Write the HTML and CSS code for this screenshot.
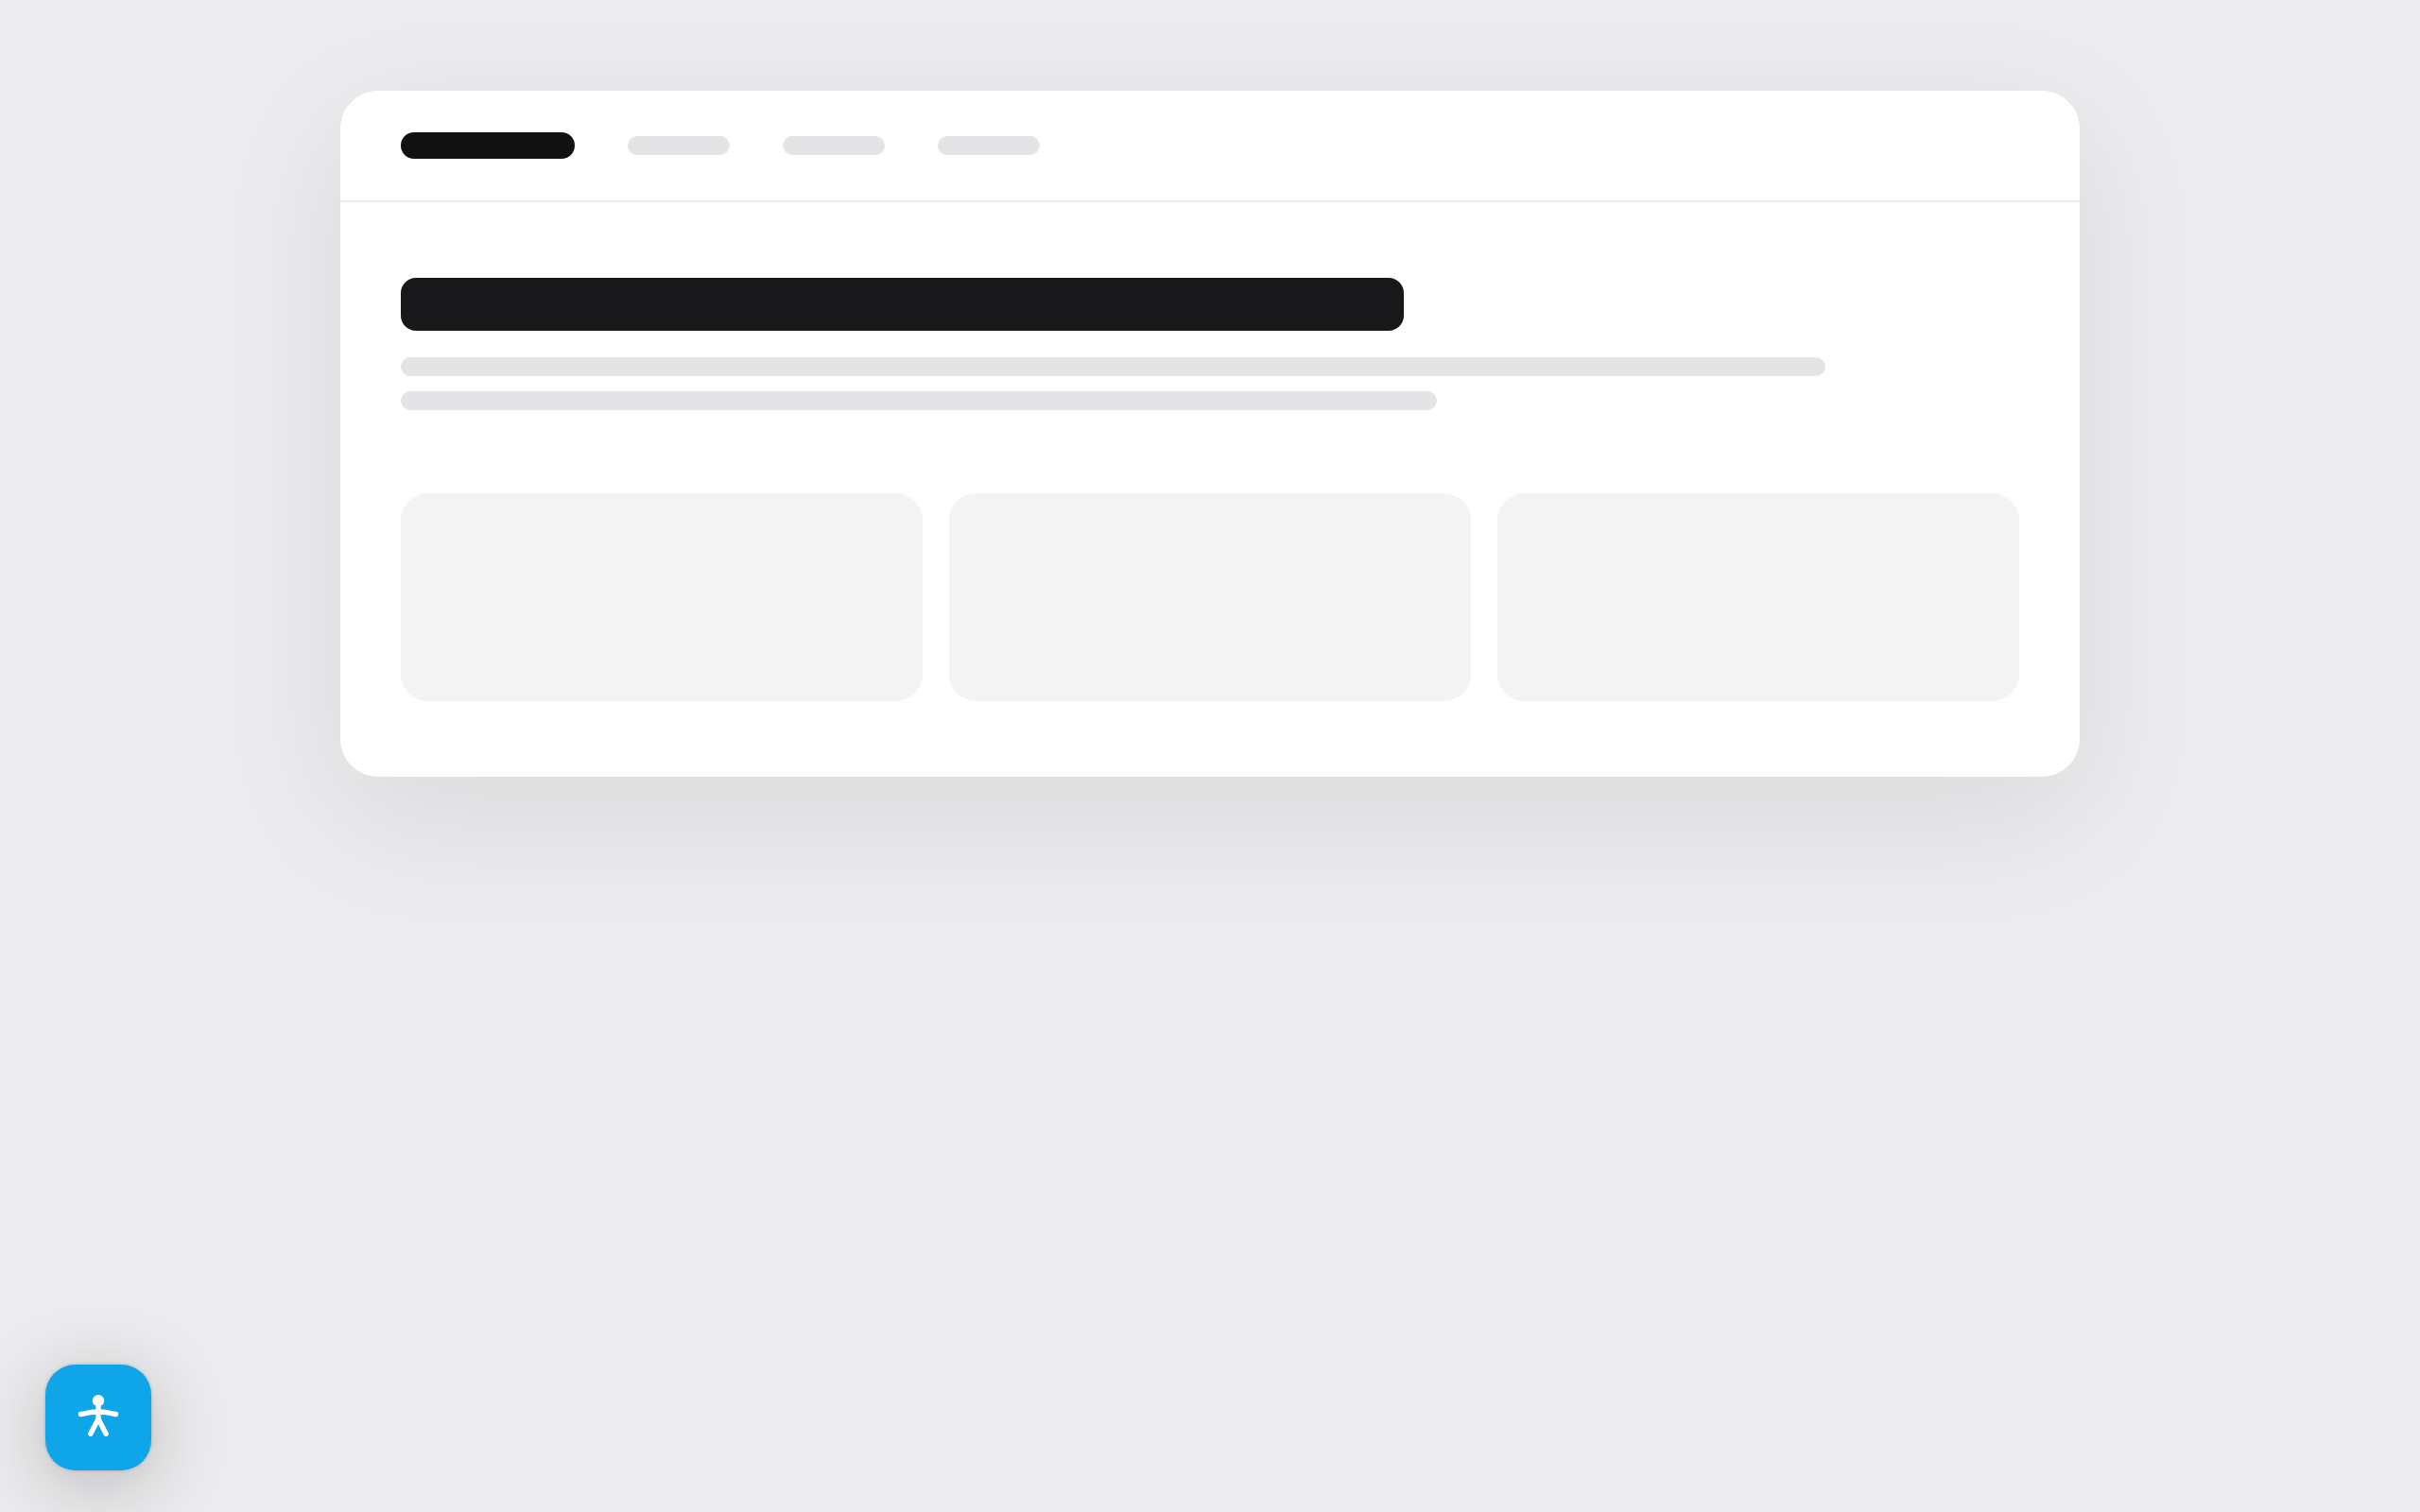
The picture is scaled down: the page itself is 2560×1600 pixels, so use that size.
FILE: index.html
```
<!DOCTYPE html>
<html lang="en">
<head>
    <meta charset="UTF-8">
    <meta name="viewport" content="width=device-width, initial-scale=1.0">
    <title>Accessibility Widget</title>
    <link rel="stylesheet" href="styles.css">
</head>
<body>
    <!-- Placeholder site -->
    <main class="site">
        <header class="site-nav">
            <div class="logo"></div>
            <div class="nav-item"></div>
            <div class="nav-item"></div>
            <div class="nav-item"></div>
        </header>
        <div class="site-body">
            <div class="title"></div>
            <div class="line line-long"></div>
            <div class="line line-short"></div>
            <div class="cards">
                <div class="card"></div>
                <div class="card"></div>
                <div class="card"></div>
            </div>
        </div>
    </main>

    <!-- Widget button -->
    <button class="widget-btn" type="button" aria-label="Accessibility">
        <svg class="widget-icon" viewBox="0 0 52 52" aria-hidden="true">
            <circle cx="26" cy="8.2" r="6.2" fill="currentColor"/>
            <path d="M7.5 22.5C14 21.5 20 19.8 26 19.8S38 21.5 44.5 22.5M26 10v18M17.8 43.2 26 27.5l8.2 15.7" fill="none" stroke="currentColor" stroke-width="5.4" stroke-linecap="round" stroke-linejoin="round"/>
        </svg>
    </button>
</body>
</html>
```

FILE: styles.css
```
* {
    box-sizing: border-box;
}

body {
    margin: 0;
    padding: 96px 48px;
    min-height: 100vh;
    background-color: #ececee;
    font-family: Inter, sans-serif;
}

.site {
    max-width: 1840px;
    margin: 0 auto;
    background-color: #ffffff;
    border-radius: 40px;
    overflow: hidden;
    box-shadow: 0 40px 140px rgba(0, 0, 0, 0.08);
}

.site-nav {
    display: flex;
    align-items: center;
    gap: 56px;
    padding: 44px 64px;
    border-bottom: 2px solid #ededee;
}

.logo {
    width: 184px;
    height: 28px;
    border-radius: 14px;
    background-color: #111111;
}

.nav-item {
    width: 108px;
    height: 20px;
    border-radius: 10px;
    background-color: #e4e4e6;
}

.site-body {
    padding: 80px 64px;
}

.title {
    width: 62%;
    height: 56px;
    margin-bottom: 28px;
    border-radius: 16px;
    background-color: #18181a;
}

.line {
    height: 20px;
    margin-bottom: 16px;
    border-radius: 10px;
    background-color: #e4e4e6;
}

.line-long {
    width: 88%;
}

.line-short {
    width: 64%;
}

.cards {
    display: grid;
    grid-template-columns: repeat(3, 1fr);
    gap: 28px;
    margin-top: 88px;
}

.card {
    height: 220px;
    border-radius: 28px;
    background-color: #f4f4f4;
}

/* Floats over the page */
.widget-btn {
    position: fixed;
    left: 48px;
    bottom: 44px;
    display: flex;
    align-items: center;
    justify-content: center;
    width: 112px;
    height: 112px;
    padding: 0;
    border: none;
    border-radius: 32px;
    background-color: #0ea5e9;
    color: #ffffff;
    cursor: pointer;
    box-shadow: 0 16px 80px rgba(0, 0, 0, 0.22), 0 0 4px rgba(0, 0, 0, 0.2);
}

.widget-icon {
    width: 52px;
    height: 52px;
}
```
